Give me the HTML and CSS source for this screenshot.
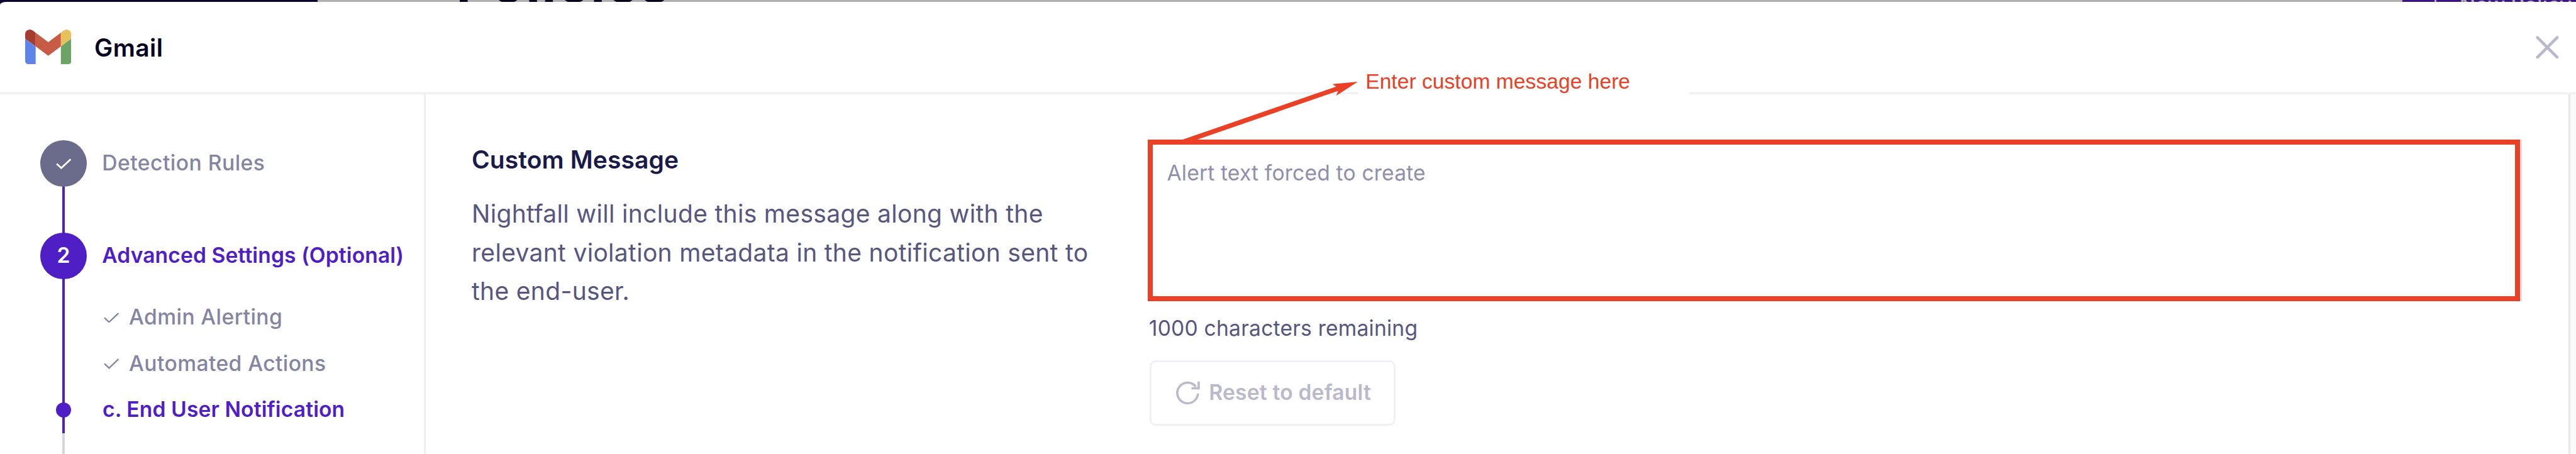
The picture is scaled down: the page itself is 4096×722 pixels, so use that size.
FILE: index.html
```html
<!DOCTYPE html>
<html lang="en">
<head>
<meta charset="utf-8">
<title>Gmail</title>
<link rel="stylesheet" href="styles.css">
</head>
<body>
<div class="app">
  <div class="backdrop">
    <div class="backdrop-nav"></div>
    <div class="backdrop-body"><span class="backdrop-title">Policies</span></div>
    <div class="backdrop-button"><span class="plus"></span><span class="backdrop-label">New Policy</span></div>
  </div>
  <section class="panel">
    <header class="header">
      <svg class="logo" viewBox="52 42 88 66" aria-hidden="true">
        <path fill="#5f84e8" d="M58 108h14V74L52 59v43c0 3.32 2.69 6 6 6"/>
        <path fill="#6ca465" d="M120 108h14c3.32 0 6-2.69 6-6V59l-20 15"/>
        <path fill="#e8c15c" d="M120 48v26l20-15v-8c0-7.42-8.47-11.65-14.4-7.2"/>
        <path fill="#c85b46" d="M72 74V48l24 18 24-18v26L96 92"/>
        <path fill="#a43d30" d="M52 51v8l20 15V48l-5.6-4.2c-5.94-4.45-14.4-.22-14.4 7.2"/>
      </svg>
      <h1 class="title">Gmail</h1>
      <svg class="close" viewBox="0 0 48 48" aria-label="Close"><path d="M3.5 3.5l41 41M44.500 3.500l-41 41"/></svg>
    </header>
    <div class="content">
      <nav class="sidebar">
        <div class="step done">
          <span class="circle"><svg class="tick" viewBox="0 0 32 22"><path d="M1.500 11l9.500 9L30.500 1.500"/></svg></span>
          <span class="label">Detection Rules</span>
        </div>
        <div class="step current">
          <span class="circle"><span class="number">2</span></span>
          <span class="label">Advanced Settings (Optional)</span>
        </div>
        <div class="substeps">
          <div class="substep"><svg class="tick" viewBox="0 0 32 22"><path d="M1.500 11l9.500 9L30.500 1.500"/></svg><span class="label">Admin Alerting</span></div>
          <div class="substep"><svg class="tick" viewBox="0 0 32 22"><path d="M1.500 11l9.500 9L30.500 1.500"/></svg><span class="label">Automated Actions</span></div>
          <div class="substep active"><span class="dot"></span><span class="label">c. End User Notification</span></div>
        </div>
      </nav>
      <main class="main">
        <div class="about">
          <h2 class="heading">Custom Message</h2>
          <p class="text">Nightfall will include this message along with the<br>relevant violation metadata in the notification sent to<br>the end-user.</p>
        </div>
        <div class="form">
          <div class="message"><span class="placeholder">Alert text forced to create</span></div>
          <div class="remaining">1000 characters remaining</div>
          <button class="reset" disabled>
            <svg class="reload" viewBox="0 0 50 50"><path d="M45.500 26A21.500 21.500 0 1 1 41 11.500M47 1v14H32"/></svg>
            <span>Reset to default</span>
          </button>
        </div>
      </main>
      <div class="scrollbar"></div>
    </div>
  </section>
  <div class="note">Enter custom message here</div>
  <svg class="arrow" viewBox="0 0 366 122"><polygon points="0,121 321,10 313,5 366,0 321,29 325,19 27,122"/></svg>
</div>
</body>
</html>
```
FILE: styles.css
```css
html { font-size: 76.532px; }
* { box-sizing: border-box; }
body { margin: 0; overflow: hidden; font-family: Inter, "Liberation Sans", sans-serif; }
h1, h2, p { margin: 0; }
svg { display: block; flex: none; }

.app { position: relative; width: 4096px; height: 722px; overflow: hidden; background: linear-gradient(90deg, #0e0030 50%, #fff 50%); display: flex; flex-direction: column; }

.backdrop { display: flex; flex: none; height: .04rem; overflow: hidden; line-height: 0; white-space: nowrap; }
.backdrop-nav { width: 6.6rem; background: #0e0030; }
.backdrop-body { width: 43.32rem; padding-left: 2.88rem; background: #b0b0b2; }
.backdrop-title { display: block; margin-top: -.35rem; font-size: 1.1rem; font-weight: 700; letter-spacing: .034rem; color: #05001c; }
.backdrop-button { display: flex; flex: 1; padding-left: .66rem; background: #3b1489; color: #b0b0b2; }
.plus { width: .04rem; background: #b0b0b2; }
.backdrop-label { margin: .11rem 0 0 .48rem; font-size: .44rem; font-weight: 500; }

.panel { flex: 1; display: flex; flex-direction: column; background: #fff; border-top-left-radius: .14rem .06rem; overflow: hidden; }
.header { display: flex; align-items: center; flex: none; height: 1.92rem; padding: 0 .36rem 0 .52rem; border-bottom: .04rem solid #f0f0f5; }
.logo { width: .96rem; height: .72rem; }
.title { margin-left: .48rem; font-size: .51rem; font-weight: 600; line-height: 1; letter-spacing: .006rem; color: #05001f; }
.close { width: .48rem; height: .48rem; margin-left: auto; }
.close path { fill: none; stroke: #bab9cc; stroke-width: 6; stroke-linecap: round; }

.content { flex: 1; display: flex; min-height: 0; }
.sidebar { position: relative; flex: none; width: 8.84rem; padding: .96rem 0 0 .84rem; border-right: .04rem solid #f0f0f5; font-size: .44rem; line-height: 1; white-space: nowrap; color: #8484a3; }
.sidebar::before { content: ""; position: absolute; left: 1.3rem; top: 1.5rem; bottom: 0; width: .04rem; background: linear-gradient(#4f1ec4 5.54rem, #d5d5de 5.54rem); }
.step { position: relative; display: flex; align-items: center; height: .96rem; font-weight: 500; letter-spacing: .006rem; }
.step + .step { margin-top: .96rem; }
.circle { display: flex; align-items: center; justify-content: center; width: .96rem; height: .96rem; border-radius: 50%; background: #6b6b8c; color: #fff; }
.label { padding-bottom: .03rem; }
.step .label { margin-left: .32rem; }
.current, .active { color: #4f1ec4; }
.step.current { font-weight: 600; letter-spacing: .001rem; }
.current .circle { background: #4f1ec4; }
.number { padding-bottom: .03rem; }
.tick { width: .32rem; height: .22rem; }
.tick path { fill: none; stroke: currentColor; stroke-width: 3.6; }
.substep .tick path { stroke-width: 3; }
.substeps { margin-top: .32rem; }
.substep { display: flex; align-items: center; height: .96rem; padding-left: 1.32rem; font-weight: 500; letter-spacing: .005rem; }
.substep .label { margin-left: .2rem; }
.substep.active { position: relative; padding-left: .32rem; font-weight: 600; letter-spacing: .001rem; }
.active .label { margin-left: .65rem; }
.dot { width: .32rem; height: .32rem; border-radius: 50%; background: #4f1ec4; }

.main { flex: 1; display: flex; padding-left: .96rem; }
.about { flex: none; width: 14.04rem; padding-top: 1.06rem; }
.heading { font-size: .51rem; font-weight: 600; line-height: .6rem; letter-spacing: .001rem; color: #1a1a4a; }
.text { margin-top: .424rem; font-size: .51rem; line-height: .8rem; letter-spacing: .004rem; color: #56567f; white-space: nowrap; }
.form { flex: none; width: 28.52rem; padding-top: .945rem; font-size: .44rem; }
.message { height: 3.36rem; padding: .36rem .3rem; border: .105rem solid #ea4025; box-shadow: .04rem 0 0 0 #dcdce4; line-height: .44rem; color: #8f8fad; }
.placeholder { display: block; letter-spacing: .002rem; }
.remaining { margin: .34rem 0 0 .03rem; line-height: .44rem; letter-spacing: .0025rem; color: #56567f; }
.reset { display: flex; align-items: center; gap: .18rem; width: 5.12rem; height: 1.36rem; margin: .44rem 0 0 .04rem; padding: 0 0 0 .52rem; border: .04rem solid #f0f0f5; border-radius: .12rem; background: #fff; font: 600 .44rem/1 Inter, sans-serif; letter-spacing: .002rem; color: #bab9cc; }
.reset span { padding-bottom: .03rem; white-space: nowrap; }
.reload { width: .5rem; height: .5rem; }
.reload path { fill: none; stroke: #bab9cc; stroke-width: 4.6; }
.scrollbar { flex: none; width: .16rem; margin-left: auto; border-left: .04rem solid #e8e8e8; background: #fafafa; }

.note { position: absolute; left: 28.23rem; top: 1.4rem; width: 6.87rem; height: .6rem; padding-left: .14rem; background: #fff; font: .44rem/.6rem "Liberation Sans", sans-serif; color: #ea4025; white-space: nowrap; }
.arrow { position: absolute; left: 24.55rem; top: 1.695rem; width: 3.66rem; height: 1.22rem; }
.arrow polygon { fill: #ea4025; }
```
